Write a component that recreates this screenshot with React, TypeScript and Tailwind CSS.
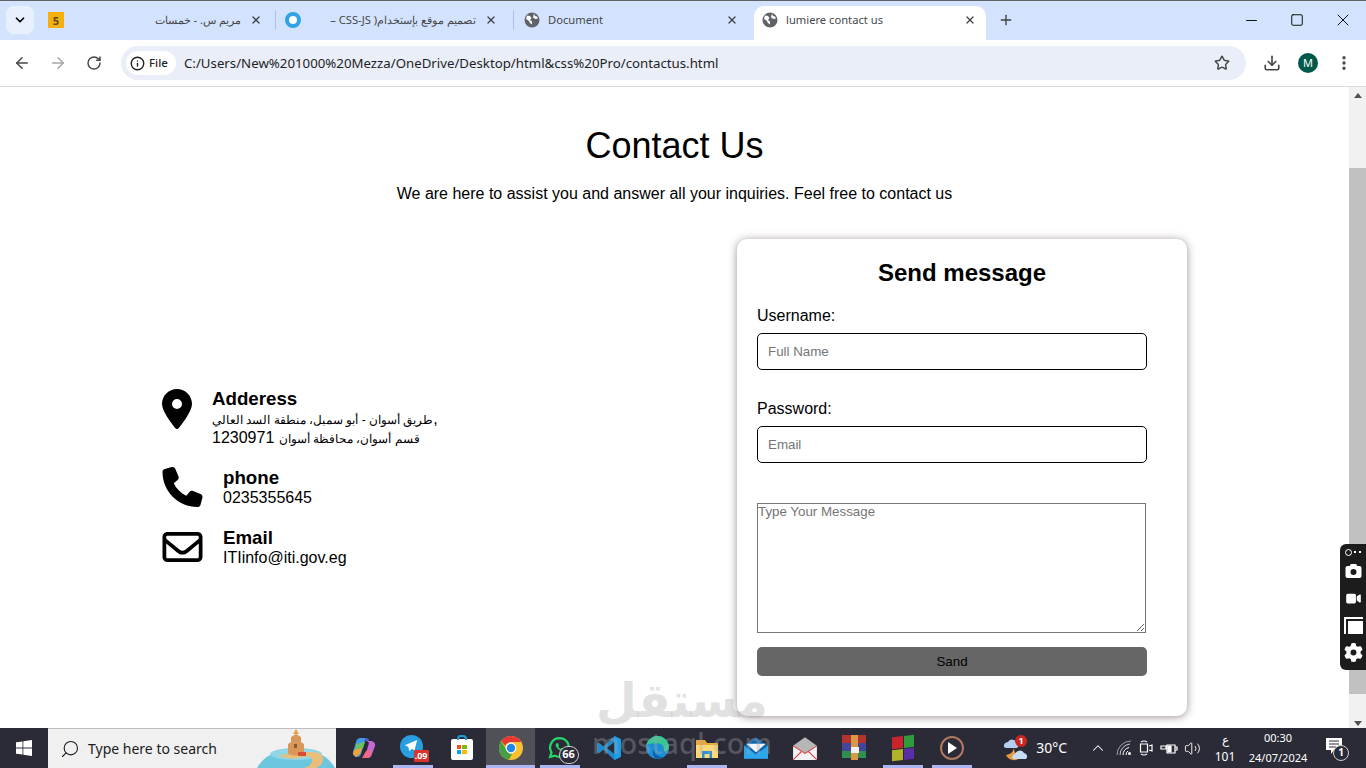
import { ArrowLeft, ArrowRight, RotateCw, Star, Download, EllipsisVertical, X, Plus, Minus, Square, ChevronDown, ChevronUp, Info, Search, Volume2 } from "lucide-react";
import { FaLocationDot, FaPhone, FaRegEnvelope, FaCamera, FaVideo, FaGear } from "react-icons/fa6";

const ui = "font-['Noto_Sans','Open_Sans',sans-serif]";

function Globe({ className }: { className: string }) {
  return (
    <svg viewBox="0 0 16 16" className={className}>
      <circle cx="8" cy="8" r="7.5" fill="#5f6368" />
      <path d="M3 3.5l3 .5 1.5 2-1.5 2 2 1.5v3L6 11 4.5 8.5 2 7zM10 1.5l1 2.5 2 .5 1 2-2.5.5L9 5.5z" fill="#fff" />
    </svg>
  );
}

function Tab({ icon, title, w, rtl }: { icon: React.ReactNode; title: string; w: string; rtl?: boolean }) {
  return (
    <div className={`flex h-[34px] shrink-0 items-center pb-[6px] ${w}`}>
      <div className="w-[16px] shrink-0">{icon}</div>
      <span
        dir={rtl ? "rtl" : undefined}
        className={`min-w-0 flex-1 truncate text-[11.2px] text-[#45474a] ${rtl ? "pr-[3px] text-right" : "pl-2"}`}
      >
        {title}
      </span>
      <X className="mx-[6px] h-[12px] w-[12px] shrink-0 text-[#3c4043]" strokeWidth={2.6} />
    </div>
  );
}

function TabStrip() {
  return (
    <div className={`flex h-[40px] shrink-0 items-end border-t border-[#5f6368] bg-[#d3e3fd] ${ui}`}>
      <div className="mb-[6px] ml-[6px] flex h-[28px] w-[28px] items-center justify-center rounded-lg bg-[#e9f0fd]">
        <ChevronDown className="h-[14px] w-[14px] text-black" strokeWidth={3} />
      </div>
      <div className="ml-[14px] flex items-center">
        <Tab
          w="w-[220px]"
          rtl
          title="مريم س. - خمسات"
          icon={<div className="flex h-[16px] w-[16px] items-center justify-center bg-[#f7ae0f] text-[11px] font-bold leading-none text-[#5c4a10]">5</div>}
        />
        <div className="mb-[6px] ml-[7px] mr-[9px] h-[20px] w-px bg-[#a9c3ec]" />
        <Tab
          w="w-[218px]"
          rtl
          title="تصميم موقع بإستخدام( CSS-JS –"
          icon={<div className="h-[16px] w-[16px] rounded-full border-[4px] border-[#2ea3e6] bg-white" />}
        />
        <div className="mb-[6px] ml-[10px] mr-[10px] h-[20px] w-px bg-[#a9c3ec]" />
        <Tab w="w-[220px]" title="Document" icon={<Globe className="h-[16px] w-[16px]" />} />
      </div>
      <div className="ml-[10px] flex h-[34px] w-[232px] items-center rounded-t-[10px] bg-white pl-[8px]">
        <Tab w="w-[220px]" title="lumiere contact us" icon={<Globe className="h-[16px] w-[16px]" />} />
      </div>
      <div className="mb-[6px] ml-[12px] flex h-[28px] items-center">
        <Plus className="h-[16px] w-[16px] text-[#3c4043]" strokeWidth={2} />
      </div>
      <div className="mb-[6px] ml-auto flex h-[28px] items-center text-[#111]">
        <div className="flex w-[46px] justify-center"><Minus className="h-[17px] w-[17px]" strokeWidth={1.4} /></div>
        <div className="flex w-[46px] justify-center"><Square className="h-[14px] w-[14px]" strokeWidth={1.7} /></div>
        <div className="flex w-[46px] justify-center"><X className="h-[20px] w-[20px]" strokeWidth={1.2} /></div>
      </div>
    </div>
  );
}

function Toolbar() {
  return (
    <div className={`flex h-[47px] shrink-0 items-center border-b border-[#dadce0] bg-white ${ui}`}>
      <div className="flex w-[116px] shrink-0 items-center pl-[13px] text-[#474747]">
        <ArrowLeft className="h-[18px] w-[18px]" strokeWidth={2} />
        <ArrowRight className="ml-[18px] h-[18px] w-[18px] text-[#a4a6a8]" strokeWidth={2} />
        <RotateCw className="ml-[19px] h-[16px] w-[16px]" strokeWidth={2.2} />
      </div>
      <div className="ml-[5px] flex h-[34px] w-[1125px] items-center rounded-full bg-[#e9eef8] pl-[5px] pr-[16px]">
        <div className="flex h-[24px] w-[50px] items-center gap-[4px] rounded-full bg-white pl-[4px] text-[11.5px] font-medium text-[#1f1f1f]">
          <Info className="h-[15px] w-[15px]" strokeWidth={2.2} />
          File
        </div>
        <span className="ml-[8px] flex-1 pt-[1px] text-[13.25px] text-[#1f1f1f]">C:/Users/New%201000%20Mezza/OneDrive/Desktop/html&amp;css%20Pro/contactus.html</span>
        <Star className="h-[16px] w-[16px] text-[#474747]" strokeWidth={2.2} />
      </div>
      <Download className="ml-[17px] h-[18px] w-[18px] text-[#474747]" strokeWidth={2.2} />
      <div className="ml-[17px] flex h-[20px] w-[20px] items-center justify-center rounded-full bg-[#00594a] text-[11px] text-white">M</div>
      <EllipsisVertical className="ml-[17px] h-[18px] w-[18px] text-[#474747]" strokeWidth={2.4} />
    </div>
  );
}

function ContactItem({ icon, title, children }: { icon: React.ReactNode; title: string; children: React.ReactNode }) {
  return (
    <div className="flex items-start">
      <div className="mr-[20px] shrink-0">{icon}</div>
      <div className="text-base leading-[19px] text-black">
        <h3 className="text-[18.72px] font-bold leading-[21px]">{title}</h3>
        {children}
      </div>
    </div>
  );
}

function ContactForm() {
  return (
    <form className="flex h-[477px] w-[450px] shrink-0 flex-col rounded-[10px] bg-white px-[20px] pt-[20px] shadow-[0_1px_8px_rgba(90,70,70,0.6)]">
      <h2 className="text-center text-2xl font-bold leading-[28px]">Send message</h2>
      <label className="mt-[20px] text-base leading-[18px]">Username:</label>
      <input
        placeholder="Full Name"
        className="mt-[8px] h-[37px] w-[390px] rounded-[5px] border border-black px-[10px] text-[13.33px] outline-none placeholder:text-[#757575]"
      />
      <label className="mt-[30px] text-base leading-[18px]">Password:</label>
      <input
        placeholder="Email"
        className="mt-[8px] h-[37px] w-[390px] rounded-[5px] border border-black px-[10px] text-[13.33px] outline-none placeholder:text-[#757575]"
      />
      <textarea
        placeholder="Type Your Message"
        className="mt-[40px] h-[130px] w-[389px] border border-[#767676] text-[13.33px] leading-[15px] outline-none placeholder:text-[#757575]"
      />
      <button type="button" className="mt-[14px] h-[29px] w-[390px] rounded-[5px] bg-[#666666] text-[13.33px] text-black">
        Sand
      </button>
    </form>
  );
}

function Page() {
  return (
    <main className="relative min-w-0 flex-1 bg-white font-['Liberation_Sans',Arial,sans-serif] text-black">
      <h1 className="mt-[38px] text-center text-4xl leading-[41px]">Contact Us</h1>
      <p className="mt-[19px] text-center text-base leading-[18px]">
        We are here to assist you and answer all your inquiries. Feel free to contact us
      </p>
      <div className="mt-[36px] flex items-center">
        <div className="flex w-[737px] shrink-0 flex-col gap-[20px] pl-[162px]">
          <ContactItem title="Adderess" icon={<FaLocationDot className="mt-px h-[40px] w-[30px]" />}>
            <p>
              <span className="text-xs leading-none">طريق أسوان - أبو سمبل، منطقة السد العالي</span>,
              <br />
              <span className="text-xs leading-none">قسم أسوان، محافظة أسوان</span> 1230971
            </p>
          </ContactItem>
          <ContactItem title="phone" icon={<FaPhone className="h-[40px] w-[41px]" />}>
            <p>0235355645</p>
          </ContactItem>
          <ContactItem title="Email" icon={<FaRegEnvelope className="h-[40px] w-[41px]" />}>
            <p>ITIinfo@iti.gov.eg</p>
          </ContactItem>
        </div>
        <ContactForm />
      </div>
    </main>
  );
}

function Scrollbar() {
  return (
    <div className="flex w-[17px] shrink-0 flex-col items-center bg-[#f1f1f1]">
      <div className="mt-[6px] h-0 w-0 border-x-[4px] border-b-[5px] border-x-transparent border-b-[#505050]" />
      <div className="mt-[70px] h-[526px] w-full bg-[#c1c1c1]" />
      <div className="mt-auto mb-[2px] h-0 w-0 border-x-[4px] border-t-[5px] border-x-transparent border-t-[#505050]" />
    </div>
  );
}

function RecorderWidget() {
  return (
    <div className="absolute right-0 top-[457px] flex h-[126px] w-[26px] flex-col items-center rounded-l-md bg-[#1c1c1c] pt-[3px] text-white">
      <div className="flex h-[10px] items-center gap-[2px]">
        <div className="h-[7px] w-[7px] rounded-full border border-white" />
        <div className="h-[2px] w-[7px] border-b-2 border-dotted border-white" />
      </div>
      <FaCamera className="mt-[6px] h-[16px] w-[19px]" />
      <FaVideo className="mt-[13px] h-[13px] w-[19px]" />
      <div className="relative mt-[12px] h-[17px] w-[19px] border-l-2 border-t-2 border-white">
        <div className="absolute bottom-0 right-0 h-[13px] w-[15px] bg-white" />
      </div>
      <FaGear className="mt-[9px] h-[19px] w-[19px]" />
    </div>
  );
}

function Watermark() {
  return (
    <div className="pointer-events-none absolute left-[582px] top-[585px] flex w-[200px] flex-col items-center font-['Noto_Sans','DejaVu_Sans',sans-serif] text-[#aaaaaa]/35">
      <span className="font-['DejaVu_Sans',sans-serif] text-[47px] font-bold leading-[58px]">مستقل</span>
      <span className="text-[29px] font-medium leading-[26px]">mostaql.com</span>
    </div>
  );
}

function SearchArt() {
  return (
    <svg viewBox="0 0 90 40" className="absolute bottom-0 right-0 h-[40px] w-[90px]">
      <ellipse cx="50" cy="52" rx="42" ry="32" fill="#6cc6de" />
      <ellipse cx="50" cy="26" rx="26" ry="6" fill="#8fd6e6" />
      <path d="M32 27q14 6 24 2 10-2 10 3 0 6-8 8h12q8-4 7-10-1-7-14-6-18 2-31 3z" fill="#e9bd7a" />
      <path d="M42 26V16l3-2v-5l5-3 5 3v5l3 2v10q-8 3-16 0z" fill="#d9985a" />
      <path d="M50 1l3 5h-6z" fill="#e8a44c" />
      <rect x="48" y="16" width="3" height="4" fill="#8a5a30" />
      <rect x="52" y="24" width="8" height="4" fill="#d94c3a" />
    </svg>
  );
}

/* taskbar icons */
const apps: { key: string; active?: boolean; shade?: boolean; node: React.ReactNode }[] = [
  {
    key: "copilot",
    node: (
      <svg viewBox="0 0 24 24" className="h-[24px] w-[24px]">
        <path d="M8 2h6L9 18a4 4 0 0 1-4 3 4 4 0 0 1-4-5L4 6a5 5 0 0 1 4-4z" fill="#3f9be8" />
        <path d="M4 8l9-2-2 6-8 3z" fill="#6cc060" />
        <path d="M2 14l8-2-2 6-4 3-3-3z" fill="#f2a33a" />
        <path d="M15 5h4a4 4 0 0 1 4 5l-3 8a5 5 0 0 1-5 4h-4l3-5 3-10z" fill="#c56ad4" />
        <path d="M14 15l6-1-1 5a4 4 0 0 1-4 3h-5z" fill="#ef6a8a" />
        <path d="M13 2h2a3 3 0 0 1 2 3h-5z" fill="#4a63c9" />
      </svg>
    ),
  },
  {
    key: "telegram",
    active: true,
    node: (
      <div className="relative h-[26px] w-[26px]">
        <div className="flex h-[23px] w-[23px] items-center justify-center rounded-full bg-[#2a9fe0]">
          <svg viewBox="0 0 16 16" className="h-[14px] w-[14px]"><path d="M15 1L1 7l4 2 1 5 3-3 3 2z" fill="#fff" /></svg>
        </div>
        <span className="absolute bottom-[-1px] right-[-3px] rounded-[1px] bg-[#d9332b] px-[1px] text-[9px] font-bold leading-[12px] text-white">.09</span>
      </div>
    ),
  },
  {
    key: "store",
    node: (
      <div className="relative mt-[3px] grid h-[21px] w-[22px] grid-cols-2 content-center justify-center gap-[1px] rounded-[2px] bg-white px-[6px]">
        <div className="absolute left-[6px] top-[-4px] h-[5px] w-[10px] rounded-t-sm border-2 border-b-0 border-[#1f9bd8]" />
        <div className="h-[4px] bg-[#f25022]" /><div className="h-[4px] bg-[#7fba00]" />
        <div className="h-[4px] bg-[#00a4ef]" /><div className="h-[4px] bg-[#ffb900]" />
      </div>
    ),
  },
  {
    key: "chrome",
    active: true,
    shade: true,
    node: (
      <svg viewBox="0 0 24 24" className="h-[24px] w-[24px]">
        <circle cx="12" cy="12" r="12" fill="#fbc02d" />
        <path d="M12 0a12 12 0 0 1 10.4 6H12a6 6 0 0 0-5.6 3.8L2.2 5A12 12 0 0 1 12 0z" fill="#e53935" />
        <path d="M2.2 5l5 8.6A6 6 0 0 0 13 18l-3 5.8A12 12 0 0 1 2.2 5z" fill="#43a047" />
        <circle cx="12" cy="12" r="5.4" fill="#fff" />
        <circle cx="12" cy="12" r="4.2" fill="#1e88e5" />
      </svg>
    ),
  },
  {
    key: "whatsapp",
    active: true,
    node: (
      <div className="relative h-[26px] w-[26px]">
        <svg viewBox="0 0 24 24" className="h-[25px] w-[25px]">
          <path d="M12 3a9 9 0 0 0-7.7 13.6L3 21l4.5-1.2A9 9 0 1 0 12 3z" fill="none" stroke="#25d366" strokeWidth="2.2" />
          <path d="M9 8c-1 1-1 3 1 5s4 3 5.500 2l.5-1.500-2-1-1 .8c-1-.5-1.800-1.300-2.200-2.300l.8-1-1-2z" fill="#25d366" />
        </svg>
        <span className="absolute bottom-[-3px] right-[-6px] flex h-[18px] w-[20px] items-center justify-center rounded-full border border-[#cfcfcf] bg-[#2b2b38] text-[11px] font-bold text-white">66</span>
      </div>
    ),
  },
  {
    key: "vscode",
    node: (
      <svg viewBox="0 0 24 24" className="h-[26px] w-[26px]">
        <path d="M17 1l6 3v16l-6 3L7 13.500 2.500 17 1 16v-8l1.500-1L7 10.500z" fill="#2489ca" />
        <path d="M17 6.500L10 12l7 5.500z" fill="#2b2b38" />
        <path d="M17 1l6 3v16l-6 3z" fill="#1b9fe8" />
      </svg>
    ),
  },
  {
    key: "edge",
    node: (
      <svg viewBox="0 0 24 24" className="h-[25px] w-[25px]">
        <circle cx="12" cy="12" r="11" fill="#1b8fd6" />
        <path d="M1 12a11 11 0 0 1 22 0c0 3-3 4-5 3 1-4-2-7-6-7-5 0-11 0-11 4z" fill="#37c78f" />
        <path d="M9 13c-1 5 3 8 8 8a11 11 0 0 1-6 2c-4-2-4-7-2-10z" fill="#0f5fa8" />
      </svg>
    ),
  },
  {
    key: "files",
    active: true,
    node: (
      <svg viewBox="0 0 24 24" className="h-[24px] w-[24px]">
        <path d="M1 4h9l2 3h11v15H1z" fill="#e8a93a" />
        <path d="M1 9h22v13H1z" fill="#fbd978" />
        <path d="M7 15h10v7h-2.500v-4h-5v4H7z" fill="#2a8fd8" />
      </svg>
    ),
  },
  {
    key: "mail",
    node: (
      <svg viewBox="0 0 24 24" className="h-[26px] w-[26px]">
        <path d="M1 10l11-8 11 8v12H1z" fill="#0f66b0" />
        <path d="M3 8h18l-9 8z" fill="#f2f6fa" />
        <path d="M1 10l11 8 11-8v12H1z" fill="#2ea8ec" />
      </svg>
    ),
  },
  {
    key: "gmail",
    node: (
      <svg viewBox="0 0 24 24" className="h-[26px] w-[26px]">
        <path d="M1 10l11-8 11 8-11 7z" fill="#b6b6b6" />
        <path d="M1 10l11 7 11-7v13H1z" fill="#f4f4f4" />
        <path d="M1 23l8-8M23 23l-8-8M1 10l11 7 11-7" stroke="#e0474c" strokeWidth="1" fill="none" />
      </svg>
    ),
  },
  {
    key: "winrar",
    node: (
      <svg viewBox="0 0 24 25" className="h-[25px] w-[24px]">
        <rect y="0" width="24" height="8" fill="#b5332e" />
        <rect y="8" width="24" height="8" fill="#43479b" />
        <rect y="16" width="24" height="7" fill="#2f8f4f" />
        <rect x="9" y="0" width="7" height="25" fill="#d89a48" />
        <rect x="9" y="12" width="8" height="6" fill="#f2f2f2" />
      </svg>
    ),
  },
  {
    key: "colors",
    active: true,
    node: (
      <div className="grid h-[24px] w-[22px] -skew-y-6 grid-cols-2 gap-[1px]">
        <div className="bg-[#c9242b]" /><div className="bg-[#2f9b3d]" />
        <div className="bg-[#b3b329]" /><div className="bg-[#5b2ea8]" />
      </div>
    ),
  },
  {
    key: "player",
    active: true,
    node: (
      <div className="flex h-[24px] w-[24px] items-center justify-center rounded-full border-2 border-[#b0785c] bg-[#2b2b38]">
        <div className="ml-[2px] h-0 w-0 border-y-[6px] border-l-[9px] border-y-transparent border-l-white" />
      </div>
    ),
  },
];

function Taskbar() {
  return (
    <footer className={`flex h-[40px] shrink-0 items-stretch bg-[#2b2b38] text-white ${ui}`}>
      <div className="flex w-[48px] shrink-0 items-center justify-center">
        <svg viewBox="0 0 16 16" className="h-[16px] w-[16px]" fill="#fff">
          <path d="M0 2.300l6.500-.9v6.200H0zM7.300 1.300L16 0v7.600H7.300zM0 8.400h6.500v6.200L0 13.700zM7.300 8.400H16V16l-8.700-1.200z" />
        </svg>
      </div>
      <div className="relative flex w-[288px] shrink-0 items-center overflow-hidden border-t border-[#bdbdbd] bg-[#f0f0f0] pl-[12px] text-sm text-[#1b1b1b]">
        <Search className="h-[20px] w-[20px] -scale-x-100" strokeWidth={1.3} />
        <span className="ml-[8px]">Type here to search</span>
        <SearchArt />
      </div>
      <div className="flex flex-1 items-stretch pl-[3px]">
        {apps.map((a) => (
          <div key={a.key} className={`flex w-[49px] shrink-0 flex-col items-center ${a.shade ? "bg-[#4f5058]" : ""}`}>
            <div className="flex flex-1 items-center justify-center pt-[2px]">{a.node}</div>
            <div className={`h-[3px] ${a.shade ? "w-full" : "w-[40px]"} ${a.active ? "bg-[#aab6f2]" : ""}`} />
          </div>
        ))}
      </div>
      <div className="mr-[19px] flex shrink-0 items-center text-xs">
        <svg viewBox="0 0 28 28" className="mr-[6px] h-[28px] w-[28px]">
          <path d="M2 13a4 4 0 0 1 4-5 5 5 0 0 1 9 1 3 3 0 0 1 0 5H4z" fill="#b4cff2" />
          <path d="M12 14a9 9 0 0 1-8 7 9 9 0 0 0 15 2 9 9 0 0 1-7-9z" fill="#ea9a3e" />
          <path d="M11 25a3 3 0 0 1 2-5 5 5 0 0 1 9-1 3.500 3.500 0 0 1 2 6z" fill="#c6dcf7" />
          <circle cx="19" cy="7" r="6" fill="#c8281e" />
          <text x="19" y="10" textAnchor="middle" fontSize="9" fontWeight="700" fill="#fff">1</text>
        </svg>
        <span className="mr-[22px] text-sm">30°C</span>
        <ChevronUp className="mr-[9px] h-[18px] w-[18px]" strokeWidth={1.4} />
        <svg viewBox="0 0 16 16" className="mr-[6px] h-[16px] w-[16px]" fill="none" stroke="#fff" strokeWidth="1">
          <path d="M1 15A14 14 0 0 1 15 1" opacity="0.55" />
          <path d="M4 15A11 11 0 0 1 14 4" opacity="0.75" />
          <path d="M7 15a8 8 0 0 1 6-7.500M10 15a5 5 0 0 1 2-4" />
          <circle cx="13.500" cy="13.500" r="1.500" fill="#fff" stroke="none" />
        </svg>
        <svg viewBox="0 0 16 18" className="mr-[6px] h-[18px] w-[16px]" fill="none" stroke="#fff" strokeWidth="1.200">
          <path d="M3 3q3-2 6 0M3 15q3 2 6 0M2.500 5h7v8h-7zM11 7l3-1v6l-3-1" />
        </svg>
        <svg viewBox="0 0 18 14" className="mr-[6px] h-[14px] w-[18px]" fill="none" stroke="#fff" strokeWidth="1.200">
          <path d="M1 5h5v3H1zM7 4h8v8H7zM15 6h2v3h-2" />
          <path d="M8 5h3v6H8z" fill="#fff" />
        </svg>
        <Volume2 className="h-[17px] w-[17px]" strokeWidth={1.3} />
        <div className="ml-[12px] flex w-[24px] flex-col items-center text-xs leading-[17px]">
          <span>ع</span>
          <span>101</span>
        </div>
        <div className="ml-[9px] flex w-[64px] flex-col items-center text-[11px] leading-[20px]">
          <span>00:30</span>
          <span className="whitespace-nowrap">24/07/2024</span>
        </div>
        <div className="relative ml-[15px] h-[22px] w-[22px]">
          <svg viewBox="0 0 18 18" className="h-[18px] w-[18px]">
            <path d="M1 1h16v12H9l-3 4v-4H1z" fill="#fff" />
            <path d="M4 4h10M4 7h10M4 10h7" stroke="#2b2b38" strokeWidth="1" />
          </svg>
          <span className="absolute bottom-[-2px] right-[-2px] flex h-[16px] w-[16px] items-center justify-center rounded-full border border-[#cfcfcf] bg-[#2b2b38] text-[10px] font-bold">1</span>
        </div>
      </div>
    </footer>
  );
}

export default function App() {
  return (
    <div className="relative flex h-[768px] w-[1366px] flex-col overflow-hidden bg-white">
      <TabStrip />
      <Toolbar />
      <div className="relative flex min-h-0 flex-1">
        <Page />
        <Scrollbar />
        <RecorderWidget />
        <Watermark />
      </div>
      <Taskbar />
    </div>
  );
}
